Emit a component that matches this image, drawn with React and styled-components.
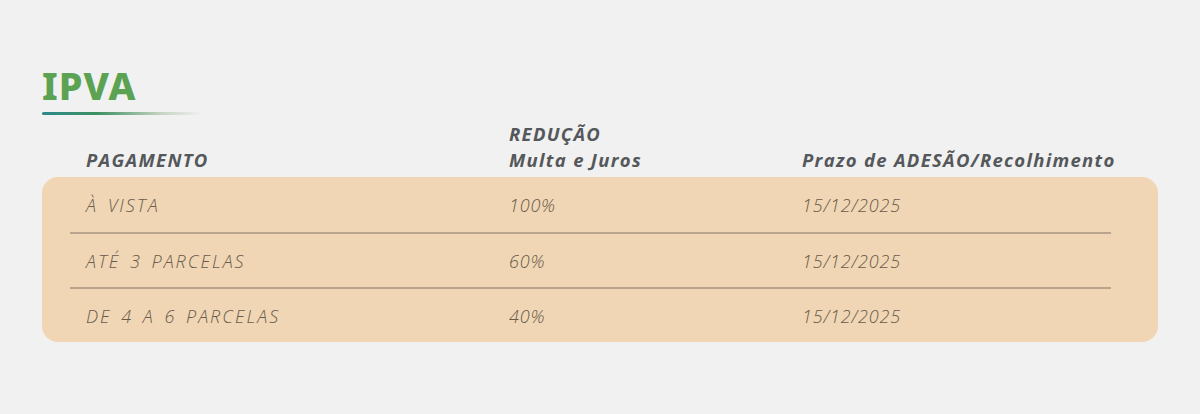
import React from 'react'
import styled, { createGlobalStyle } from 'styled-components'

const Global = createGlobalStyle`
body {
  margin: 0;
  background-color: #f1f1f1;
  font-family: "Open Sans", "Noto Sans", sans-serif;
}
`

const Page = styled.div`
width: 1200px;
height: 414px;
box-sizing: border-box;
padding: 62px 42px 0 42px;
`

const Titulo = styled.h1`
margin: 0;
font-family: "Noto Sans", sans-serif;
font-size: 38px;
font-weight: 800;
letter-spacing: 1px;
color: #5ba252;
line-height: 46px;
`

const Traco = styled.div`
width: 160px;
height: 3px;
margin-top: 4px;
border-radius: 2px;
background: linear-gradient(90deg, #2c8a8a 0%, #3f9163 35%, rgba(120, 160, 110, 0.35) 75%, rgba(241, 241, 241, 0) 100%);
`

const Cabecalho = styled.div`
display: grid;
grid-template-columns: 423px 293px 1fr;
align-items: end;
padding-left: 44px;
margin-top: 6px;
height: 56px;
padding-bottom: 8px;
box-sizing: border-box;
`

const TituloColuna = styled.div`
font-family: "Open Sans", sans-serif;
font-weight: 700;
font-style: italic;
font-size: 18.5px;
letter-spacing: 1.3px;
line-height: 26px;
color: #55585b;
`

const Painel = styled.div`
background-color: #f0d6b4;
border-radius: 16px;
padding: 0 47px 0 28px;
`

const Linha = styled.div`
display: grid;
grid-template-columns: 423px 293px 1fr;
align-items: center;
height: 55px;
padding-left: 16px;
border-top: ${(p) => (p.$primeira ? 'none' : '2px solid #b9a58c')};
box-sizing: border-box;
`

const Celula = styled.div`
font-family: "Open Sans", sans-serif;
font-weight: 300;
font-style: italic;
font-size: 18px;
letter-spacing: ${(p) => (p.$texto ? '2px' : '0.8px')};
word-spacing: ${(p) => (p.$texto ? '3px' : '0')};
color: #6a5b4c;
`

const linhas = [
  ['À VISTA', '100%', '15/12/2025'],
  ['ATÉ 3 PARCELAS', '60%', '15/12/2025'],
  ['DE 4 A 6 PARCELAS', '40%', '15/12/2025'],
]

export default function App() {
  return (
    <>
      <Global />
      <Page>
        <Titulo>IPVA</Titulo>
        <Traco />
        <Cabecalho>
          <TituloColuna>PAGAMENTO</TituloColuna>
          <TituloColuna>
            REDUÇÃO
            <br />
            Multa e Juros
          </TituloColuna>
          <TituloColuna>Prazo de ADESÃO/Recolhimento</TituloColuna>
        </Cabecalho>
        <Painel>
          {linhas.map((l, i) => (
            <Linha key={i} $primeira={i === 0}>
              <Celula $texto>{l[0]}</Celula>
              <Celula>{l[1]}</Celula>
              <Celula>{l[2]}</Celula>
            </Linha>
          ))}
        </Painel>
      </Page>
    </>
  )
}
